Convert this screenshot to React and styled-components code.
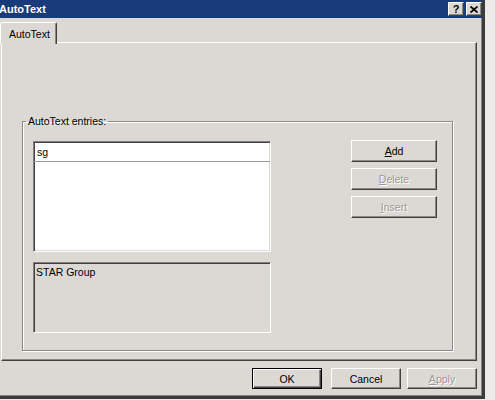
import React from "react";
import styled, { createGlobalStyle, css } from "styled-components";

const GlobalStyle = createGlobalStyle`
  html, body {
    margin: 0;
    padding: 0;
    background: #ecebe8;
    overflow: hidden;
  }
  body {
    font-family: "Liberation Sans", Arial, sans-serif;
    font-size: 10.5px;
    color: #000;
  }
`;

const face = "#dcd9d4";

const raised = css`
  border: 1px solid;
  border-color: #ffffff #404040 #404040 #ffffff;
  box-shadow: inset -1px -1px 0 #8a8884;
`;

const sunken = css`
  border: 1px solid;
  border-color: #808080 #ffffff #ffffff #808080;
  box-shadow: inset 1px 1px 0 #404040, inset -1px -1px 0 ${face};
`;

const Window = styled.div`
  box-sizing: border-box;
  margin: -3px 0 0 -6px;
  width: 491px;
  height: 402px;
  background: ${face};
  border: 3px solid;
  border-color: ${face} #3c3c3c #3c3c3c ${face};
  box-shadow: inset -1px -1px 0 #86847f;
  display: flex;
  flex-direction: column;
`;

const TitleBar = styled.div`
  height: 18px;
  background: #1a3b79;
  display: flex;
  align-items: center;
  padding: 0 0 0 2px;
  color: #fff;
  font-weight: bold;
  font-size: 11px;
`;

const Title = styled.span`
  flex: 1;
`;

const TitleButton = styled.div`
  box-sizing: border-box;
  width: 16px;
  height: 14px;
  margin-left: 2px;
  background: ${face};
  ${raised};
  display: flex;
  align-items: center;
  justify-content: center;
  color: #000;
  font-size: 11px;
  font-weight: bold;
  line-height: 1;
`;

const Body = styled.div`
  flex: 1;
  padding: 4px 5px 0 4px;
  display: flex;
  flex-direction: column;
`;

const TabRow = styled.div`
  height: 20px;
  display: flex;
  position: relative;
  z-index: 1;
`;

const Tab = styled.div`
  box-sizing: border-box;
  height: 22px;
  width: 57px;
  margin-left: -1px;
  padding: 5px 0 0 8px;
  background: ${face};
  border: 1px solid;
  border-bottom: none;
  border-color: #ffffff #404040 transparent #ffffff;
  box-shadow: inset -1px 0 0 #8a8884;
  border-radius: 2px 2px 0 0;
`;

const Panel = styled.div`
  box-sizing: border-box;
  height: 319px;
  ${raised};
  display: flex;
  flex-direction: column;
`;

const GroupBox = styled.fieldset`
  margin: 72px 23px 0 20px;
  height: 236px;
  box-sizing: border-box;
  padding: 14px 15px 16px 10px;
  border: 1px solid #8a8884;
  box-shadow: inset 1px 1px 0 #fff, 1px 1px 0 #fff;
  min-width: 0;
`;

const Legend = styled.legend`
  padding: 0 2px;
  margin-left: -7px;
  line-height: 12px;
`;

const Row = styled.div`
  display: flex;
  gap: 80px;
  align-items: flex-start;
`;

const LeftCol = styled.div`
  width: 238px;
  display: flex;
  flex-direction: column;
  gap: 10px;
`;

const Combo = styled.div`
  box-sizing: border-box;
  height: 111px;
  ${sunken};
  background: #fff;
  display: flex;
  flex-direction: column;
`;

const Edit = styled.div`
  height: 20px;
  padding: 4px 0 0 3px;
  box-sizing: border-box;
  border-bottom: 1px solid #9c9a96;
`;

const List = styled.div`
  flex: 1;
`;

const Preview = styled.div`
  box-sizing: border-box;
  height: 71px;
  ${sunken};
  padding: 3px 0 0 2px;
`;

const ButtonCol = styled.div`
  display: flex;
  flex-direction: column;
  gap: 6px;
  margin-top: -1px;
`;

const Button = styled.div`
  box-sizing: border-box;
  width: ${(p) => p.$w || 86}px;
  height: ${(p) => p.$h || 22}px;
  background: ${face};
  ${raised};
  display: flex;
  align-items: center;
  justify-content: center;
  color: ${(p) => (p.$disabled ? "#9a9894" : "#000")};
  text-shadow: ${(p) => (p.$disabled ? "1px 1px 0 #fff" : "none")};
  ${(p) =>
    p.$default &&
    css`
      margin-right: 3px;
      border: 1px solid #000;
      box-shadow: inset 1px 1px 0 #fff, inset -1px -1px 0 #404040,
        inset -2px -2px 0 #8a8884;
    `}
  u {
    text-decoration: underline;
  }
`;

const Footer = styled.div`
  display: flex;
  justify-content: flex-end;
  gap: 6px;
  margin-top: 7px;
`;

const CloseGlyph = () => (
  <svg width="8" height="7" viewBox="0 0 8 7">
    <path d="M0.5 0.5 L7.5 6.5 M7.5 0.5 L0.5 6.5" stroke="#000" strokeWidth="1.8" />
  </svg>
);

export default function App() {
  return (
    <>
      <GlobalStyle />
      <Window>
        <TitleBar>
          <Title>AutoText</Title>
          <TitleButton>?</TitleButton>
          <TitleButton>
            <CloseGlyph />
          </TitleButton>
        </TitleBar>
        <Body>
          <TabRow>
            <Tab>AutoText</Tab>
          </TabRow>
          <Panel>
            <GroupBox>
              <Legend>AutoText entries:</Legend>
              <Row>
                <LeftCol>
                  <Combo>
                    <Edit>sg</Edit>
                    <List />
                  </Combo>
                  <Preview>STAR Group</Preview>
                </LeftCol>
                <ButtonCol>
                  <Button>
                    <span>
                      <u>A</u>dd
                    </span>
                  </Button>
                  <Button $disabled>
                    <span>
                      <u>D</u>elete
                    </span>
                  </Button>
                  <Button $disabled>
                    <span>
                      <u>I</u>nsert
                    </span>
                  </Button>
                </ButtonCol>
              </Row>
            </GroupBox>
          </Panel>
          <Footer>
            <Button $w={70} $h={21} $default>
              OK
            </Button>
            <Button $w={70} $h={21}>
              Cancel
            </Button>
            <Button $w={70} $h={21} $disabled>
              <span>
                <u>A</u>pply
              </span>
            </Button>
          </Footer>
        </Body>
      </Window>
    </>
  );
}
